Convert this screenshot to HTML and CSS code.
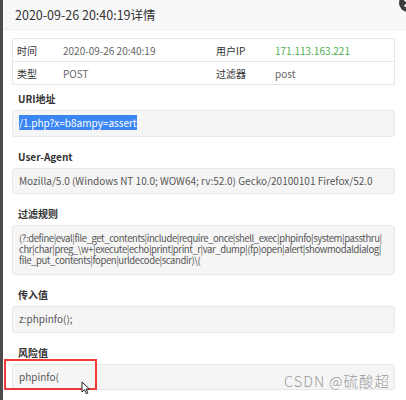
FILE: index.html
```html
<!DOCTYPE html>
<html lang="zh">
<head>
<meta charset="utf-8">
<title>详情</title>
<link rel="stylesheet" href="styles.css">
</head>
<body>
<div class="backdrop"></div>
<div class="modal">
  <div class="modal-header">2020-09-26 20:40:19详情</div>
  <span class="close-btn">
    <svg width="18" height="18" viewBox="0 0 18 18"><circle cx="9" cy="9" r="9" fill="#3d3d3d"/><path d="M5.5 5.5l7 7M12.5 5.5l-7 7" stroke="#fff" stroke-width="1.8"/></svg>
  </span>
  <div class="modal-body">
    <div class="info">
      <div class="info-row">
        <span class="k">时间</span><span class="v">2020-09-26 20:40:19</span>
        <span class="k">用户IP</span><span class="v ip">171.113.163.221</span>
      </div>
      <div class="info-row">
        <span class="k">类型</span><span class="v">POST</span>
        <span class="k">过滤器</span><span class="v">post</span>
      </div>
    </div>

    <div class="field">
      <div class="label">URI地址</div>
      <div class="box"><span class="sel">/1.php?x=b8ampy=assert</span></div>
    </div>
    <div class="field">
      <div class="label">User-Agent</div>
      <div class="box">Mozilla/5.0 (Windows NT 10.0; WOW64; rv:52.0) Gecko/20100101 Firefox/52.0</div>
    </div>
    <div class="field">
      <div class="label">过滤规则</div>
      <div class="box box-multi">(?:define|eval|file_get_contents|include|require_once|shell_exec|phpinfo|system|passthru|<br>chr|char|preg_\w+|execute|echo|print|print_r|var_dump|(fp)open|alert|showmodaldialog|<br>file_put_contents|fopen|urldecode|scandir)\(</div>
    </div>
    <div class="field">
      <div class="label">传入值</div>
      <div class="box">z:phpinfo();</div>
    </div>
    <div class="field">
      <div class="label">风险值</div>
      <div class="box">phpinfo(</div>
    </div>
  </div>
  <div class="highlight"></div>
  <svg class="cursor" width="9" height="14" viewBox="0 0 9 14"><path d="M1 1v10l2.5-2.3 1.8 4 1.6-.7-1.8-3.9H8.5z" fill="#fff" stroke="#222" stroke-width="1"/></svg>
  <div class="watermark">CSDN @硫酸超</div>
</div>
</body>
</html>
```
FILE: styles.css
```css
html, body {
  margin: 0;
  padding: 0;
  height: 100%;
}
body {
  display: flex;
  background: #fff;
  font-family: "Noto Sans CJK SC", "Noto Sans", sans-serif;
  color: #555;
  overflow: hidden;
}
.backdrop {
  width: 3px;
  flex: none;
  background: #4b4b4b;
}
.modal {
  flex: 1;
  min-width: 0;
  position: relative;
  background: #fff;
}
.modal-header {
  height: 29px;
  line-height: 29px;
  padding-left: 12px;
  font-size: 12.5px;
  color: #333;
  background: #f8f8f8;
  border-bottom: 1px solid #eee;
}
.close-btn {
  position: absolute;
  top: -6px;
  right: -11px;
  line-height: 0;
}
.modal-body {
  padding: 8px 11px 0 9px;
}
.info {
  border: 1px solid #e6e6e6;
  margin-bottom: 7px;
}
.info-row {
  display: grid;
  grid-template-columns: 46px 153px 59px 1fr;
  height: 22px;
  align-items: center;
  padding-left: 4px;
  font-size: 10px;
}
.info-row + .info-row {
  border-top: 1px solid #e6e6e6;
}
.k {
  color: #333;
}
.v {
  color: #666;
}
.ip {
  color: #4caf50;
}
.field {
  margin-bottom: 13px;
}
.label {
  font-size: 10px;
  font-weight: bold;
  color: #333;
  line-height: 14px;
  padding-left: 6px;
  margin-bottom: 4px;
}
.box {
  background: #f5f5f5;
  border: 1px solid #e8e8e8;
  border-radius: 3px;
  padding: 7px 6px;
  font-size: 10px;
  line-height: 10.5px;
  color: #555;
  white-space: nowrap;
  overflow: hidden;
}
.box-multi {
  padding: 7px 6px 8px;
  font-size: 9.5px;
  line-height: 11px;
  letter-spacing: -0.4px;
}
.sel {
  background: #3a86f4;
  color: #fff;
}
.highlight {
  position: absolute;
  left: 1px;
  top: 359px;
  width: 89px;
  height: 27px;
  border: 2px solid #f03a3a;
}
.cursor {
  position: absolute;
  left: 78px;
  top: 381px;
}
.watermark {
  position: absolute;
  left: 281px;
  top: 373px;
  font-size: 14.5px;
  line-height: 16px;
  font-weight: 300;
  color: rgba(120, 120, 120, 0.75);
  font-family: "Noto Sans CJK SC", "Noto Sans", sans-serif;
  letter-spacing: 1px;
}
```
